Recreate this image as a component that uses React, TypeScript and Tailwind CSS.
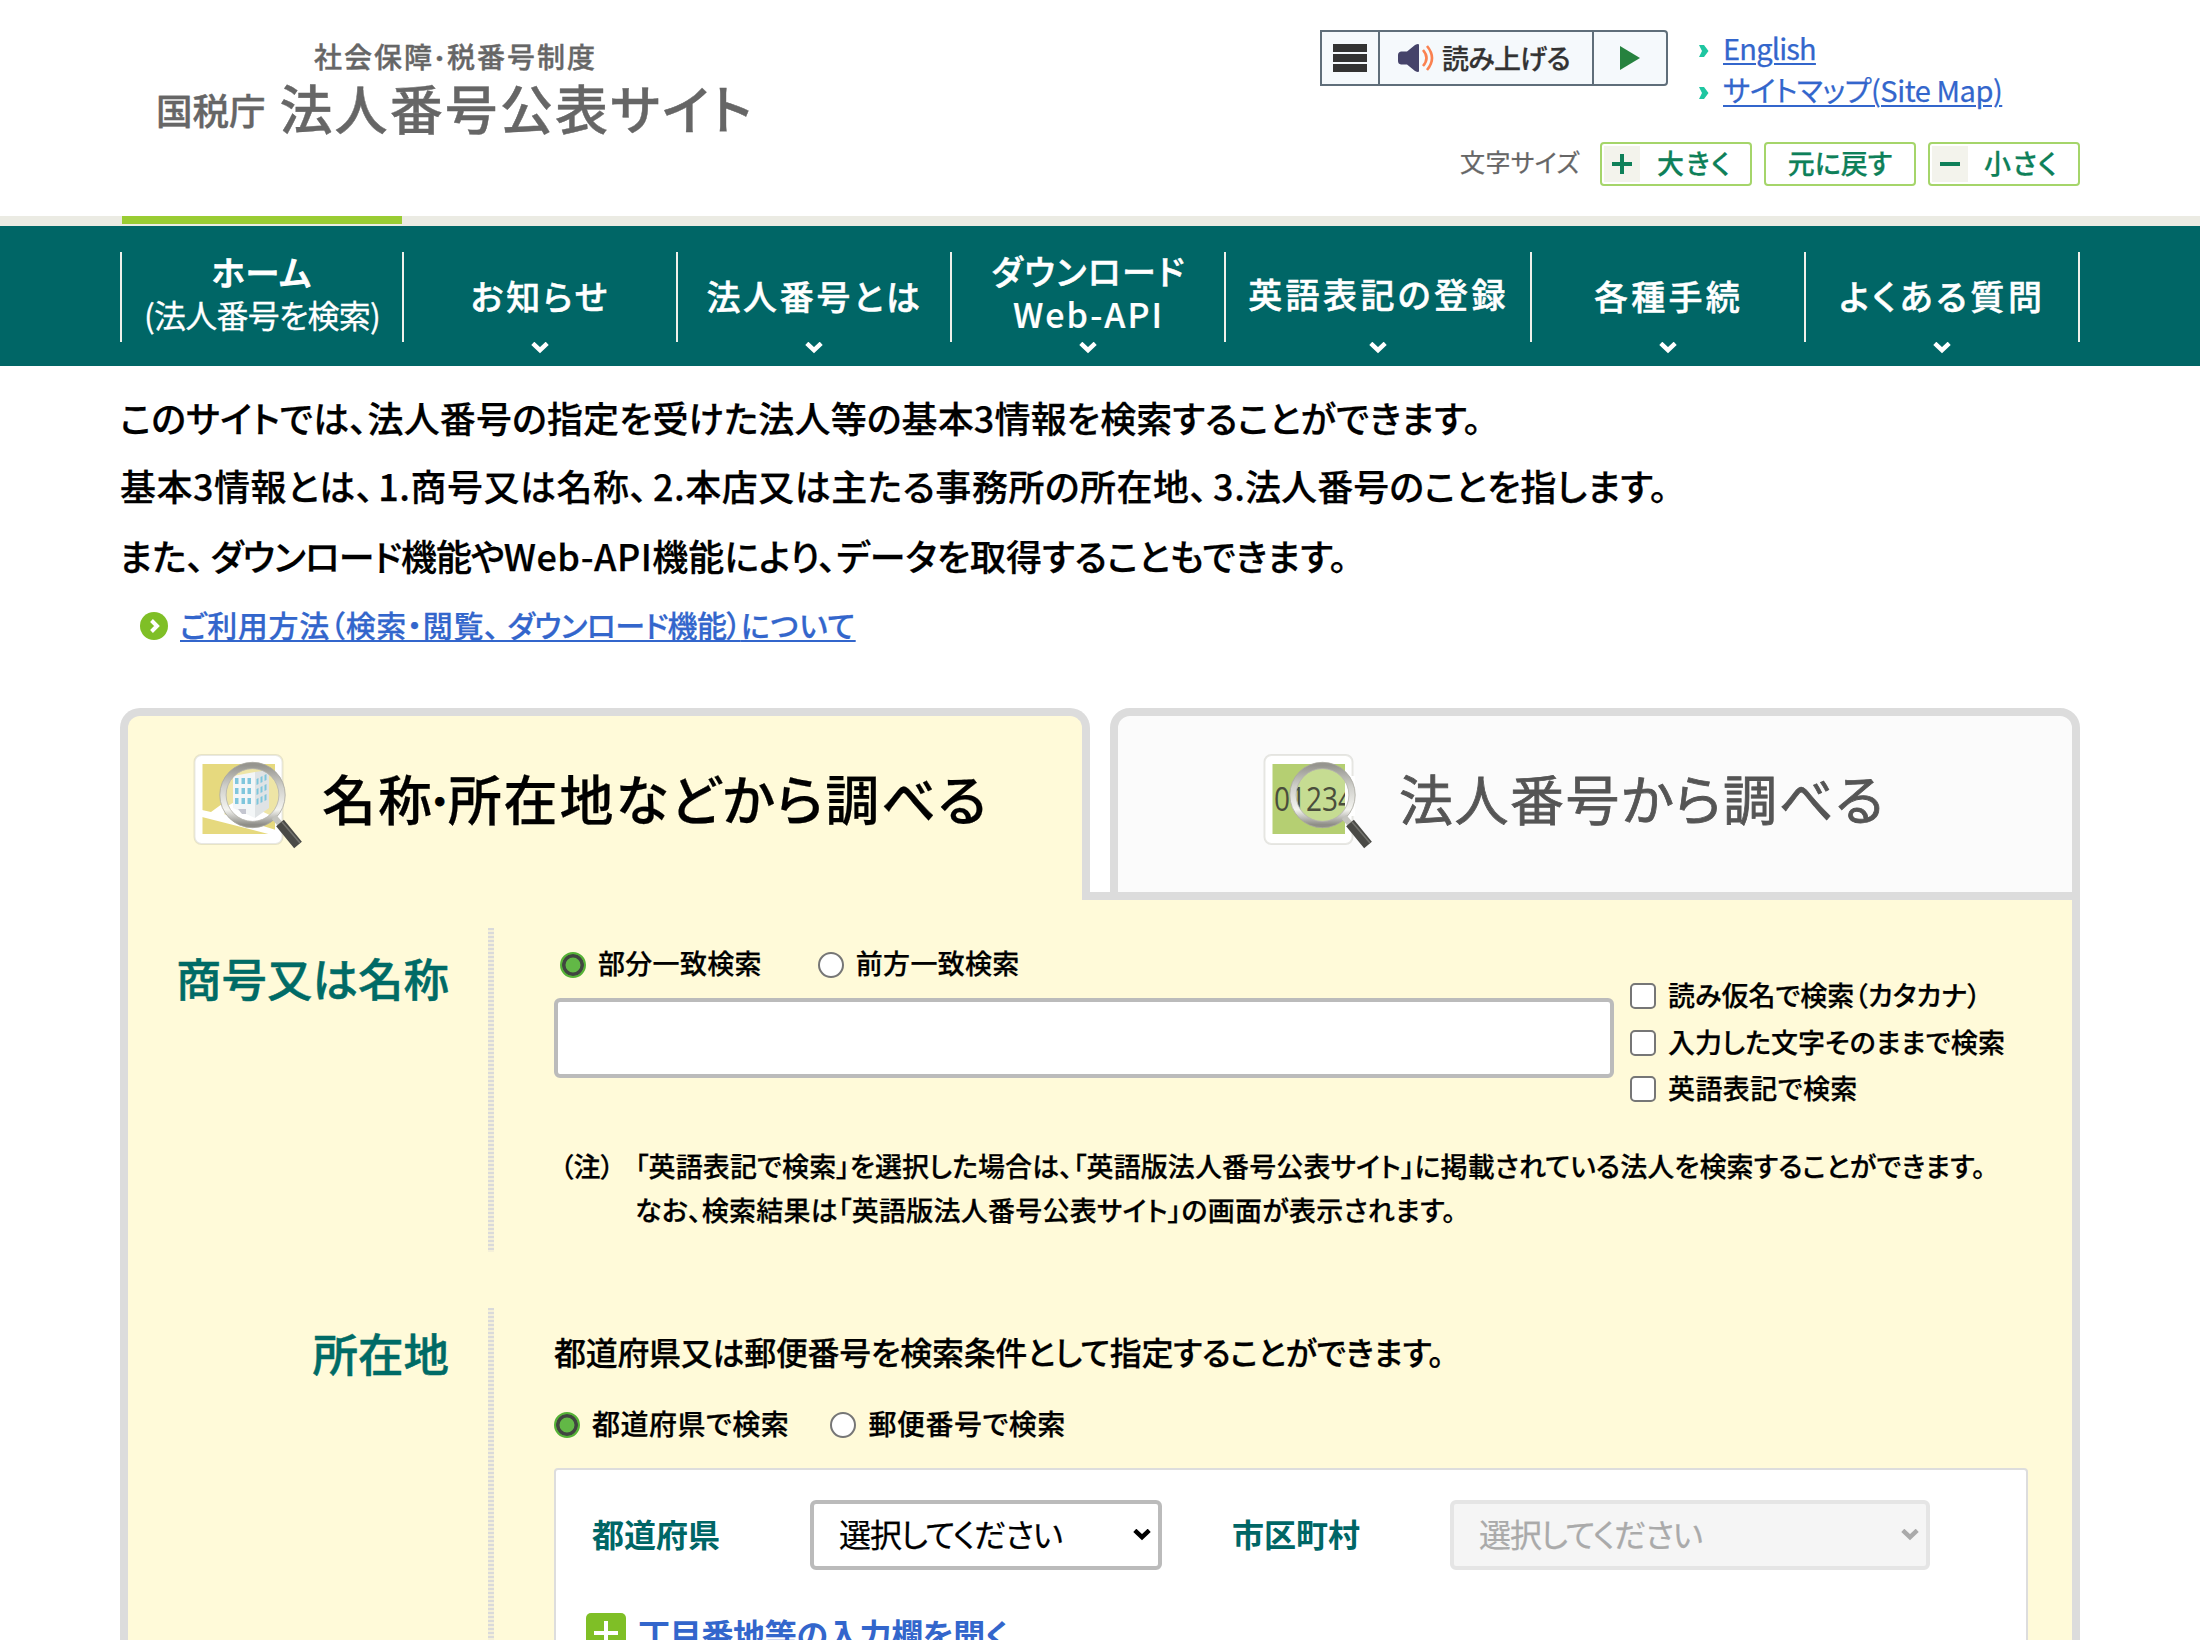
import type { ReactNode } from "react";

const navItems = [
  { width: "w-[274px]", pad: "pb-1", label: "お知らせ", track: "tracking-[2.8px]" },
  { width: "w-[274px]", pad: "pb-1", label: "法人番号とは", track: "tracking-[2.7px]" },
  { width: "w-[274px]", pad: "pb-[10px]", label: "ダウンロード", sub: "Web-API", track: "tracking-[1.4px]" },
  { width: "w-[306px]", pad: "pb-[7px]", label: "英語表記の登録", track: "tracking-[3.4px]" },
  { width: "w-[274px]", pad: "pb-1", label: "各種手続", track: "tracking-[3.2px]" },
  { width: "w-[276px]", pad: "pb-1", label: "よくある質問", track: "tracking-[3.6px]", last: true },
];

function Chevron({ className = "" }: { className?: string }) {
  return (
    <svg viewBox="0 0 18 12" className={`h-3 w-[18px] ${className}`}>
      <path d="M1.8 1.3 9 8.1 16.2 1.3" fill="none" stroke="currentColor" strokeWidth="4.4" />
    </svg>
  );
}

function LinkArrow() {
  return (
    <svg viewBox="0 0 10 12" className="mt-[8px] h-3 w-[10px]">
      <path d="M0 0h5l4.5 6L5 12H0l3-6z" fill="#1fc6a1" />
    </svg>
  );
}

function Loupe({ id, children }: { id: string; children: ReactNode }) {
  return (
    <svg viewBox="0 0 125 110" className="mt-[3px] h-[110px] w-[125px] shrink-0">
      <defs>
        <linearGradient id={`${id}-ring`} x1="0" y1="0" x2="0" y2="1">
          <stop offset="0" stopColor="#96958f" />
          <stop offset="0.35" stopColor="#cfcfca" />
          <stop offset="0.75" stopColor="#f4f4f0" />
          <stop offset="1" stopColor="#8f8e88" />
        </linearGradient>
        <clipPath id={`${id}-lens`}>
          <circle cx="64.5" cy="49" r="27" />
        </clipPath>
      </defs>
      <rect x="6.5" y="9" width="88" height="89" rx="7" fill="#fff" stroke="#8a8a7a" strokeOpacity="0.2" strokeWidth="2" />
      {children}
      <circle cx="64.5" cy="49" r="29.5" fill="none" stroke={`url(#${id}-ring)`} strokeWidth="6.5" />
      <circle cx="64.5" cy="49" r="32.7" fill="none" stroke="#a9a8a0" strokeWidth="0.8" />
      <circle cx="64.5" cy="49" r="26.4" fill="none" stroke="#b5b4ac" strokeWidth="0.8" />
      <path d="M86 71 93 79" stroke="#c4c4be" strokeWidth="6" />
      <path d="M92 77 110 99" stroke="#4a4a46" strokeWidth="10" />
      <path d="M94 76 112 97" stroke="#73736e" strokeWidth="1.6" />
    </svg>
  );
}

function BuildingIcon() {
  return (
    <Loupe id="building">
      <rect x="14.5" y="18" width="72.5" height="70" fill="#e6d97e" />
      <path d="M14 64 23 66 45 50 52 56 36 68 88 84V90L14 71z" fill="#fff" />
      <g clipPath="url(#building-lens)">
        <rect x="37" y="21" width="56" height="56" fill="#eee5a6" />
        <path d="M36 62 50 54 92 74 64 80z" fill="#fff" />
        <path d="M45 30 67 26V72L45 62z" fill="#f3f6f7" />
        <path d="M67 26 81 24V62L67 72z" fill="#dfe3e5" />
        <path
          d="M47 32h3.5v6H47zM53.5 32h3.5v6h-3.5zM59.5 32h3.5v6h-3.5zM47 42h3.5v6H47zM53.5 42h3.5v6h-3.5zM59.5 42h3.5v6h-3.5zM47 52h3.5v6H47zM53.5 52h3.5v6h-3.5zM59.5 52h3.5v6h-3.5z"
          fill="#7fc6dc"
        />
        <path
          d="M68.5 33l2-1v6l-2 1zM72.5 31l2-1v6l-2 1zM76.5 29l2-1v6l-2 1zM68.5 43l2-1v6l-2 1zM72.5 41l2-1v6l-2 1zM76.5 39l2-1v6l-2 1zM68.5 53l2-1v6l-2 1zM72.5 51l2-1v6l-2 1zM76.5 49l2-1v6l-2 1z"
          fill="#7fc6dc"
        />
        <path d="M50 63h8v5h-4z" fill="#c4c6d0" />
      </g>
    </Loupe>
  );
}

function NumberIcon() {
  return (
    <Loupe id="number">
      <rect x="14.5" y="18" width="72.5" height="70" fill="#b5cf72" />
      <circle cx="64.5" cy="49" r="27" fill="#c6dc92" />
      <text
        x="16"
        y="65"
        fontSize="32"
        textLength="80"
        lengthAdjust="spacingAndGlyphs"
        fill="#4a4d3c"
        className="font-['Open_Sans',sans-serif]"
      >
        01234
      </text>
      <path d="M87 30h10v40h-10z" fill="#fff" />
    </Loupe>
  );
}

function Choice({ label, name, checked, size = "text-[27px] tracking-[0.3px]", className = "" }: {
  label: string;
  name: string;
  checked?: boolean;
  size?: string;
  className?: string;
}) {
  return (
    <label className={`flex items-center gap-3 leading-10 font-medium ${size} ${className}`}>
      <input
        type="radio"
        name={name}
        defaultChecked={checked}
        className="mt-[2px] size-[26px] appearance-none rounded-full border-2 border-[#767676] bg-white checked:border-[#55b236] checked:bg-[#62b846] checked:shadow-[inset_0_0_0_3.5px_#404540]"
      />
      <span className="-mt-px">{label}</span>
    </label>
  );
}

function CheckItem({ label, track = "" }: { label: string; track?: string }) {
  return (
    <label className="flex h-[46.5px] items-center gap-3 text-[27px] leading-[46px] font-medium">
      <input type="checkbox" className="size-[26px] appearance-none rounded-[5px] border-2 border-[#767676] bg-white" />
      <span className={`-mt-[2px] whitespace-nowrap ${track}`}>{label}</span>
    </label>
  );
}

function SearchRow({ title, titleClass, className = "", children }: { title: string; titleClass: string; className?: string; children: ReactNode }) {
  return (
    <section className={`flex ${className}`}>
      <h3
        className={`w-[360px] shrink-0 pr-[39px] text-right text-[45.5px] leading-[60px] font-medium text-[#006b66] [-webkit-text-stroke:0.5px] ${titleClass}`}
      >
        {title}
      </h3>
      <div className="w-[6px] shrink-0 bg-[repeating-linear-gradient(to_bottom,#dadada_0_2px,#f5f0d8_2px_4px)]" />
      <div className="flex-1 pl-[60px]">{children}</div>
    </section>
  );
}

export default function App() {
  return (
    <div className="h-[1640px] overflow-hidden bg-white font-['Noto_Sans_CJK_JP','Noto_Sans',sans-serif] text-black [-webkit-text-stroke:0.25px] [font-feature-settings:'palt']">
      <header className="mx-auto flex h-[216px] w-[1960px] justify-between">
        <h1 className="pt-[38px] pl-[37px] font-medium text-[#666] [-webkit-text-stroke:0.4px]">
          <span className="block h-9 pl-[157px] text-[28px] leading-9 tracking-[2px]">
            社会保障<span className="align-[2px] text-[22px] leading-none">・</span>税番号制度
          </span>
          <span className="-mt-[2px] flex items-center">
            <span className="mt-[6px] mr-[14px] -ml-px text-[36.5px] leading-[64px]">国税庁</span>
            <span className="text-[53px] leading-[64px] tracking-[2.1px]">法人番号公表サイト</span>
          </span>
        </h1>

        <div className="w-[760px] pt-[26px]">
          <div className="flex">
            <div className="mt-1 flex h-14 w-[348px] rounded-r border-2 border-[#5f6e7a] bg-[#f5f9fc]">
              <div className="flex w-[56px] flex-col justify-center gap-[2px] pl-[11px]">
                <span className="h-[8px] w-[34px] bg-[#333]" />
                <span className="h-[8px] w-[34px] bg-[#333]" />
                <span className="h-[8px] w-[34px] bg-[#333]" />
              </div>
              <div className="flex w-[216px] items-center border-x-2 border-[#5f6e7a] pl-[18px]">
                <svg viewBox="0 0 38 28" className="h-7 w-[38px]">
                  <path d="M0 11q0-3 3-3.5h6L17 1q4-2 4 0v26q0 2-4 0L9 20.5H3Q0 20 0 17z" fill="#45436a" />
                  <path d="M25 6q7 8 0 16M29 2q10 12 0 24" fill="none" stroke="#fa8150" strokeWidth="2.6" />
                </svg>
                <span className="ml-[6px] text-[27px] leading-10 font-medium tracking-[-0.7px] text-[#333]">読み上げる</span>
              </div>
              <svg viewBox="0 0 20 24" className="mt-[14px] ml-[26px] h-6 w-5">
                <path d="M0 0 20 12 0 24z" fill="#26823f" />
              </svg>
            </div>
            <ul className="ml-[31px] text-[29px] leading-[42px] text-[#3366cc]">
              <li className="flex items-center gap-[14px]">
                <LinkArrow />
                <a className="tracking-[-0.8px] underline decoration-2 underline-offset-[3px]">English</a>
              </li>
              <li className="flex items-center gap-[14px]">
                <LinkArrow />
                <a className="tracking-[-0.45px] underline decoration-2 underline-offset-[3px]">サイトマップ(Site Map)</a>
              </li>
            </ul>
          </div>

          <div className="mt-8 flex items-center justify-end gap-3 text-[27px] leading-10 font-medium text-[#0e8059]">
            <span className="-mt-[6px] mr-2 text-[25px] font-normal tracking-[0.4px] text-[#666]">文字サイズ</span>
            <span className="flex h-11 w-[152px] items-center rounded border-2 border-[#a5d56a] p-[2px]">
              <span className="flex h-9 w-9 items-center justify-center bg-[#f3f3ec]">
                <svg viewBox="0 0 20 20" className="size-5">
                  <path d="M0 10h20M10 0v20" stroke="#0e8059" strokeWidth="4" />
                </svg>
              </span>
              <span className="-mt-[2px] ml-[17px] tracking-[2px]">大きく</span>
            </span>
            <span className="flex h-11 w-[152px] items-center justify-center rounded border-2 border-[#a5d56a] pb-[2px]">元に戻す</span>
            <span className="flex h-11 w-[152px] items-center rounded border-2 border-[#a5d56a] p-[2px]">
              <span className="flex h-9 w-9 items-center justify-center bg-[#f3f3ec]">
                <svg viewBox="0 0 20 20" className="size-5">
                  <path d="M0 10h20" stroke="#0e8059" strokeWidth="4" />
                </svg>
              </span>
              <span className="-mt-[2px] ml-[16px] tracking-[1.6px]">小さく</span>
            </span>
          </div>
        </div>
      </header>

      <div className="h-[10px] bg-[#ebebe3]">
        <div className="mx-auto w-[1960px]">
          <div className="ml-[2px] h-2 w-[280px] bg-[#99cc33]" />
        </div>
      </div>
      <nav className="h-[140px] bg-[#006666] text-white">
        <ul className="mx-auto flex w-[1960px] pt-[26px] text-center text-[34px] leading-[43px] font-medium [-webkit-text-stroke:0.5px]">
          <li className="w-[282px]">
            <div className="flex h-[90px] flex-col justify-center border-l-2 border-[#f0f0ea] pb-[9px]">
              <span className="tracking-[1px] [-webkit-text-stroke:1px]">ホーム</span>
              <span className="text-[32px] font-normal tracking-[-0.8px] [-webkit-text-stroke:0.3px]">(法人番号を検索)</span>
            </div>
          </li>
          {navItems.map((item) => (
            <li key={item.label} className={item.width}>
              <div
                className={`flex h-[90px] flex-col justify-center border-l-2 border-[#f0f0ea] pl-px ${item.pad} ${item.last ? "border-r-2" : ""}`}
              >
                <span className={item.track}>{item.label}</span>
                {item.sub && <span className="tracking-[2px] [-webkit-text-stroke:0.2px]">{item.sub}</span>}
              </div>
              <Chevron className={item.last ? "mx-auto" : "mx-auto translate-x-px"} />
            </li>
          ))}
        </ul>
      </nav>

      <main className="mx-auto w-[1960px] pt-[17px]">
        <div className="text-[36px] leading-[69px] font-medium whitespace-nowrap">
          <p className="tracking-[0.13px]">このサイトでは、法人番号の指定を受けた法人等の基本3情報を検索することができます。</p>
          <p className="-mt-px tracking-[0.5px]">
            基本3情報とは、<span className="ml-[4px]">1</span>.商号又は名称、<span className="ml-[5px]">2</span>
            .本店又は主たる事務所の所在地、<span className="ml-[5px]">3</span>
            <span className="tracking-[0.1px]">.法人番号のことを指します。</span>
          </p>
          <p className="-ml-px pt-px">
            また、<span className="ml-[6px] tracking-[-1px]">ダウンロード機能や</span>
            <span className="tracking-[0.5px]">Web-API</span>機能により、データを取得することもできます。
          </p>
        </div>
        <div className="mt-4 flex h-9 items-center pl-5">
          <svg viewBox="0 0 28 28" className="mt-1 size-7">
            <circle cx="14" cy="14" r="14" fill="#7fbf26" />
            <path d="M11.5 8.5 17 14 11.5 19.5" fill="none" stroke="#fff" strokeWidth="4" />
          </svg>
          <a className="ml-3 text-[30px] leading-9 font-medium tracking-[0.7px] text-[#3366cc] underline decoration-2 underline-offset-[3px]">
            ご利用方法（検索・閲覧、&#8202;&#8202;<span className="tracking-[-0.6px]">&#8202;&#8202;ダウンロード機能）</span>について
          </a>
        </div>

        <div className="mt-[66px] flex h-48">
          <div className="flex w-[970px] items-center rounded-t-[20px] border-8 border-b-0 border-[#dcdcdc] bg-[#fffad9] pb-[18px] pl-[60px]">
            <BuildingIcon />
            <h2 className="ml-[9px] pb-[2px] text-[54px] leading-[70px] font-medium tracking-[1.9px] whitespace-nowrap">
              名称<span className="-mx-[4px] align-[4px] text-[40px] leading-none">・</span>所在地などから調べる
            </h2>
          </div>
          <div className="w-5 border-b-8 border-[#dcdcdc]" />
          <div className="flex w-[970px] items-center rounded-t-[20px] border-8 border-[#dcdcdc] bg-[#fbfbfb] pb-[10px] pl-[140px]">
            <NumberIcon />
            <h2 className="ml-[16px] pb-[2px] text-[54px] leading-[70px] font-normal tracking-[1.5px] text-[#555] [-webkit-text-stroke:0.8px]">
              法人番号から調べる
            </h2>
          </div>
        </div>

        <div className="h-[760px] border-x-8 border-[#dcdcdc] bg-[#fffad9] pt-7">
          <SearchRow title="商号又は名称" titleClass="pt-[19px]" className="h-[324px]">
            <div className="flex pt-4 pl-[6px]">
              <Choice name="match" label="部分一致検索" checked />
              <Choice name="match" label="前方一致検索" className="ml-14" />
            </div>
            <div className="mt-[14px] flex h-[117px]">
              <input type="text" className="mt-px h-20 w-[1060px] rounded-md border-4 border-[#bbb] bg-white px-4 text-[32px]" />
              <div className="-mt-[24px] ml-4">
                <CheckItem label="読み仮名で検索（カタカナ）" />
                <CheckItem label="入力した文字そのままで検索" track="tracking-[0.1px]" />
                <CheckItem label="英語表記で検索" track="tracking-[0.4px]" />
              </div>
            </div>
            <div className="mt-[30px] flex pl-[6px] text-[27px] leading-[44px] font-medium whitespace-nowrap">
              <span className="w-[75px]">（注）</span>
              <p className="tracking-[0.11px]">
                「英語表記で検索」を選択した場合は、「英語版法人番号公表サイト」に掲載されている法人を検索することができます。
                <br />
                <span className="tracking-[0.25px]">なお、検索結果は「英語版法人番号公表サイト」の画面が表示されます。</span>
              </p>
            </div>
          </SearchRow>

          <SearchRow title="所在地" titleClass="pt-[14px]" className="mt-14 h-[400px]">
            <p className="pt-[21px] text-[32px] leading-[44px] font-medium tracking-[-0.3px]">
              都道府県又は郵便番号を検索条件として指定することができます。
            </p>
            <div className="mt-[31px] flex">
              <Choice name="area" label="都道府県で検索" checked size="text-[28px] tracking-[0.5px]" />
              <Choice name="area" label="郵便番号で検索" size="text-[28px] tracking-[0.5px]" className="ml-[41px]" />
            </div>
            <div className="mt-[25px] h-[300px] w-[1474px] rounded border-2 border-[#ddd] bg-white pt-[30px]">
              <div className="flex items-center pl-9 text-[32px] leading-[62px]">
                <span className="-mt-1 w-[218px] font-bold text-[#006666] [-webkit-text-stroke:0]">都道府県</span>
                <span className="flex h-[70px] w-[352px] items-center justify-between rounded-md border-4 border-[#bbb] pr-[7px] pl-[25px]">
                  <span className="-mt-1 tracking-[-1.1px]">選択してください</span>
                  <Chevron />
                </span>
                <span className="-mt-1 ml-[70px] w-[218px] font-bold text-[#006666] [-webkit-text-stroke:0]">市区町村</span>
                <span className="flex h-[70px] w-[480px] items-center justify-between rounded-md border-4 border-[#e5e5e5] bg-[#f5f5f5] pr-[7px] pl-[25px] text-[#aaa]">
                  <span className="-mt-1 tracking-[-1.1px]">選択してください</span>
                  <Chevron />
                </span>
              </div>
              <div className="mt-[43px] flex items-center pl-[30px]">
                <svg viewBox="0 0 40 40" className="size-10">
                  <rect width="40" height="40" rx="5" fill="#7fbf26" />
                  <path d="M8 20h24M20 8v24" stroke="#fff" strokeWidth="4" />
                </svg>
                <span className="ml-3 text-[32px] leading-10 font-bold tracking-[-0.3px] text-[#3366cc] [-webkit-text-stroke:0]">
                  丁目番地等の入力欄を開く
                </span>
              </div>
            </div>
          </SearchRow>
        </div>
      </main>
    </div>
  );
}
